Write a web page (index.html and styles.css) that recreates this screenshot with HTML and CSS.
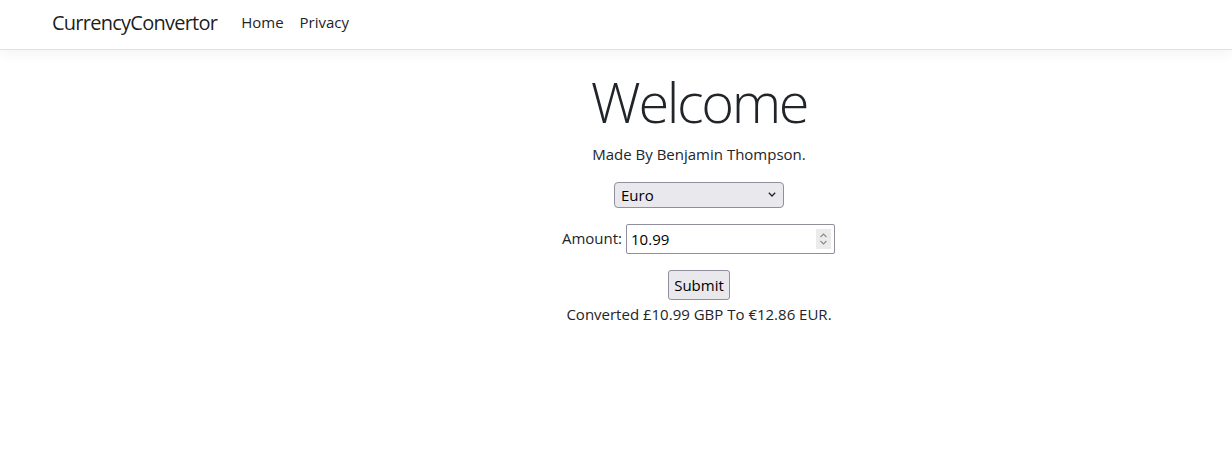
FILE: index.html
```html
<!DOCTYPE html>
<html lang="en">
<head>
<meta charset="utf-8">
<title>Home Page - CurrencyConvertor</title>
<link rel="stylesheet" href="styles.css">
</head>
<body>
<header>
  <nav class="navbar">
    <div class="nav-inner">
      <a class="brand" href="#">CurrencyConvertor</a>
      <ul class="nav-links">
        <li><a class="nav-link" href="#">Home</a></li>
        <li><a class="nav-link" href="#">Privacy</a></li>
      </ul>
    </div>
  </nav>
</header>
<main class="main">
  <div class="text-center">
    <h1 class="display">Welcome</h1>
    <p class="lead-line">Made By Benjamin Thompson.</p>
    <form class="convert-form">
      <div class="select-wrap">
        <select class="currency-select">
          <option>Euro</option>
          <option>US Dollar</option>
          <option>Japanese Yen</option>
        </select>
      </div>
      <div class="amount-row">
        <label class="amount-label" for="amount">Amount:</label>
        <span class="amount-box">
          <input class="amount-input" id="amount" type="text" value="10.99">
          <span class="spin">
            <svg width="15" height="20" viewBox="0 0 15 20"><path d="M4.5 8 L7.5 5 L10.5 8" fill="none" stroke="#8a8a8a" stroke-width="1.1"/><path d="M4.5 12 L7.5 15 L10.5 12" fill="none" stroke="#8a8a8a" stroke-width="1.1"/></svg>
          </span>
        </span>
      </div>
      <div class="submit-row">
        <button class="submit-btn" type="button">Submit</button>
      </div>
    </form>
    <p class="result">Converted £10.99 GBP To €12.86 EUR.</p>
  </div>
</main>
</body>
</html>
```
FILE: styles.css
```css
html, body {
  margin: 0;
  padding: 0;
}
body {
  font-family: "Open Sans", "Noto Sans", sans-serif;
  font-size: 16px;
  line-height: 1.5;
  color: #212529;
  background: #fff;
}
.navbar {
  height: 49px;
  border-bottom: 1px solid #dee2e6;
  box-shadow: 0 4px 12px rgba(0, 0, 0, 0.05);
  margin-bottom: 18px;
  background: #fff;
}
.nav-inner {
  display: flex;
  align-items: center;
  height: 45px;
  padding-left: 52px;
}
.brand {
  font-size: 20px;
  color: rgba(0, 0, 0, 0.9);
  text-decoration: none;
  margin-right: 16px;
  letter-spacing: -0.75px;
}
.nav-links {
  display: flex;
  list-style: none;
  margin: 0;
  padding: 0;
}
.nav-link {
  display: block;
  padding: 8px 8px;
  color: #212529;
  text-decoration: none;
  font-size: 15px;
}
.main {
  margin-left: 166px;
}
.text-center {
  text-align: center;
}
.display {
  font-size: 56px;
  font-weight: 300;
  line-height: 1.2;
  margin: 0 0 8px 0;
  letter-spacing: -2.4px;
}
.lead-line {
  margin: 0 0 16px 0;
  font-size: 15px;
}
.convert-form {
  display: flex;
  flex-direction: column;
  align-items: center;
}
.currency-select {
  appearance: none;
  -webkit-appearance: none;
  width: 170px;
  height: 26px;
  font-family: inherit;
  font-size: 15px;
  background-color: #e9e9ed;
  background-image: url("data:image/svg+xml,%3Csvg xmlns='http://www.w3.org/2000/svg' width='8' height='5' viewBox='0 0 8 5'%3E%3Cpath d='M0.8 0.8 L4 4 L7.2 0.8' fill='none' stroke='%23222' stroke-width='1.3'/%3E%3C/svg%3E");
  background-repeat: no-repeat;
  background-position: right 7px center;
  border: 1px solid #8f8f9d;
  border-radius: 4px;
  color: #000;
  padding: 0 6px;
}
.amount-row {
  margin-top: 16px;
  display: flex;
  align-items: center;
  gap: 4px;
  margin-left: -1px;
}
.amount-label {
  font-size: 15px;
}
.amount-box {
  position: relative;
  display: inline-block;
}
.amount-input {
  width: 209px;
  height: 30px;
  box-sizing: border-box;
  border: 1px solid #8f8f9d;
  border-radius: 2px;
  font-family: inherit;
  font-size: 15px;
  padding: 1px 4px;
  color: #000;
  background: #fff;
}
.spin {
  position: absolute;
  right: 4px;
  top: 5px;
  width: 15px;
  height: 20px;
  background: #ebebeb;
  display: flex;
}
.submit-row {
  margin-top: 16px;
}
.submit-btn {
  height: 30px;
  width: 62px;
  font-family: inherit;
  font-size: 15px;
  background: #e9e9ed;
  border: 1px solid #8f8f9d;
  border-radius: 3px;
  color: #000;
  padding: 0;
}
.result {
  margin: 0;
  font-size: 15px;
  line-height: 28px;
}
```
